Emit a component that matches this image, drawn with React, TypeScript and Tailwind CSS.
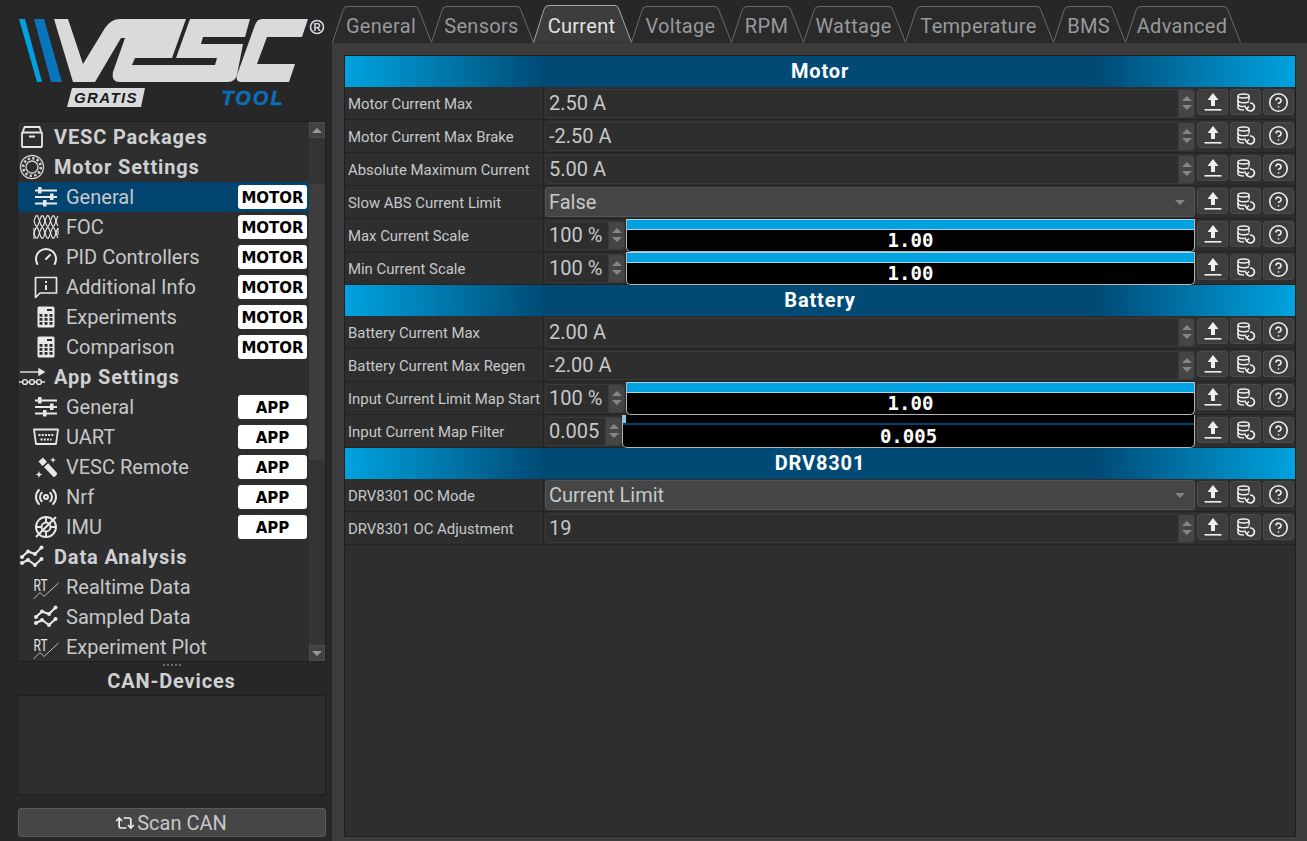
import React from "react";
import { Gauge, Radio, CircleHelp, Repeat2 } from "lucide-react";

const Logo = () => (
  <svg width="314" height="96" viewBox="15 12 314 96" className="block">
    <polygon points="19,19 25,19 42,82 37,82" fill="#00a0e3" />
    <polygon points="34,19 44,19 62,82 51,82" fill="#0a74bd" />
    <path
      d="M54 19 L68 19 L83 64 L105 28 Q111 19 120 19 L186 19 L172 58 L135 58 L132 65 L215 65 L217 58 L176 58 L190 19 L250 19 L245 37 L203 37 L201 44 L243 44 L237 75 Q235 82 228 82 L120 82 Q111 82 113 72 L125 38 L121 38 L95 82 L73 82 Z"
      fill="#d9dadc"
    />
    <path d="M262 19 L308 19 L302 37 L267 37 L257 64 L295 64 L289 82 L242 82 Q235 82 237 75 L255 25 Q257 19 262 19 Z" fill="#d9dadc" />
    <circle cx="317" cy="27" r="6.5" fill="none" stroke="#d9dadc" strokeWidth="1.6" />
    <text x="317" y="31" textAnchor="middle" fontSize="10" fontWeight="700" fill="#d9dadc" fontFamily="Liberation Sans, sans-serif">R</text>
    <polygon points="72,88 145,88 141,107 67,107" fill="#d9dadc" />
    <text x="106" y="103" textAnchor="middle" fontSize="15" fontWeight="700" fontStyle="italic" letterSpacing="1.4" fill="#1a1a1a" fontFamily="Liberation Sans, sans-serif">GRATIS</text>
    <text x="253" y="105" textAnchor="middle" fontSize="20" fontWeight="700" fontStyle="italic" letterSpacing="2" fill="#0a6fb8" stroke="#0a6fb8" strokeWidth="0.4" fontFamily="Liberation Sans, sans-serif">TOOL</text>
  </svg>
);

const W = "#e8e8e8";
const PackageIcon = () => (
  <svg width="24" height="24" viewBox="0 0 24 24" fill="none" stroke={W} strokeWidth="1.8">
    <path d="M2.5 8 L4.5 2 H19.5 L21.5 8" strokeLinejoin="round" />
    <rect x="2" y="7.5" width="20" height="14.5" rx="1" />
    <path d="M9 11.5 H15" strokeWidth="2" />
  </svg>
);
const MotorIcon = () => (
  <svg width="26" height="26" viewBox="0 0 26 26" fill="none" stroke="#cfcfcf">
    <circle cx="13" cy="13" r="11.5" strokeWidth="1.4" />
    <circle cx="13" cy="13" r="6" strokeWidth="1.4" />
    <circle cx="13" cy="13" r="8.8" strokeWidth="2.6" strokeDasharray="2.4 2.2" />
  </svg>
);
const SlidersIcon = () => (
  <svg width="24" height="24" viewBox="0 0 24 24" fill={W}>
    <rect x="1" y="4.5" width="22" height="2" />
    <rect x="1" y="11" width="22" height="2" />
    <rect x="1" y="17.5" width="22" height="2" />
    <rect x="4" y="2" width="3.5" height="6.5" />
    <rect x="16" y="8.5" width="3.5" height="6.5" />
    <rect x="9" y="15" width="3.5" height="6.5" />
  </svg>
);
const wave = (y0: number, amp: number, ph: number) => {
  const pts: string[] = [];
  for (let x = 0; x <= 24; x += 1) {
    pts.push(`${x === 0 ? "M" : "L"}${x + 1} ${(y0 + amp * Math.sin((x / 11) * 2 * Math.PI + ph)).toFixed(2)}`);
  }
  return pts.join(" ");
};
const FocIcon = () => (
  <svg width="26" height="26" viewBox="0 0 26 26" fill="none" stroke={W} strokeWidth="1.1">
    {[0, 3.14].map((p) => (
      <React.Fragment key={p}>
        <path d={wave(7, 5.5, p)} />
        <path d={wave(19, 5.5, p)} />
      </React.Fragment>
    ))}
    <path d="M1 14 V25 M25 14 V21" />
  </svg>
);
const InfoIcon = () => (
  <svg width="24" height="24" viewBox="0 0 24 24" fill="none" stroke={W} strokeWidth="1.7">
    <path d="M1.5 2.5 H22.5 V18 H6 L1.5 22.5 Z" strokeLinejoin="round" />
    <path d="M12 6 V8 M12 10 V15" strokeWidth="2" />
  </svg>
);
const CalcIcon = () => (
  <svg width="24" height="24" viewBox="0 0 24 24">
    <rect x="3.5" y="1.5" width="17" height="21" rx="1.5" fill={W} />
    <rect x="13" y="4" width="5" height="2" fill="#2e2e2e" />
    {[9, 13, 17].flatMap((y) => [5.5, 10.5, 15.5].map((x) => <rect key={`${x}-${y}`} x={x} y={y} width="3" height="2.8" fill="#2e2e2e" />))}
  </svg>
);
const AppIcon = () => (
  <svg width="26" height="26" viewBox="0 0 26 26" fill="none" stroke={W} strokeWidth="1.4">
    <path d="M1 8 H22" />
    <path d="M20 5 L25 8 L20 11 Z" fill={W} />
    <path d="M0 18 H26" />
    <circle cx="6" cy="18" r="2.4" fill="#2e2e2e" />
    <circle cx="13" cy="18" r="2.4" fill="#2e2e2e" />
    <circle cx="20" cy="18" r="2.4" fill="#2e2e2e" />
  </svg>
);
const UartIcon = () => (
  <svg width="26" height="24" viewBox="0 0 26 24" fill="none" stroke={W} strokeWidth="1.8">
    <path d="M1 4.5 H25 L23 19 H3 Z" strokeLinejoin="round" />
    <path d="M5.5 10 H20.5" strokeWidth="2" strokeDasharray="2 1.2" />
    <path d="M7.5 14.5 H18.5" strokeWidth="2" strokeDasharray="2 1.2" />
  </svg>
);
const WandIcon = () => (
  <svg width="24" height="24" viewBox="0 0 24 24" fill={W}>
    <path d="M4.5 6.5 L9 2.5 L13 7 L8.5 11 Z" />
    <path d="M10 12 L14.2 8.2 L23 18 Q23.5 19 22.5 20 L21 21.5 Q20 22.5 19 21.5 Z" />
    <path d="M19 2 L19.8 4.2 L22 5 L19.8 5.8 L19 8 L18.2 5.8 L16 5 L18.2 4.2 Z" />
    <path d="M5 16 L5.9 18.6 L8.5 19.5 L5.9 20.4 L5 23 L4.1 20.4 L1.5 19.5 L4.1 18.6 Z" />
  </svg>
);
const ImuIcon = () => (
  <svg width="24" height="24" viewBox="0 0 24 24" fill="none" stroke={W} strokeWidth="1.9">
    <circle cx="12" cy="12" r="10" />
    <circle cx="12" cy="12" r="4.5" />
    <path d="M2 22 L22 2" />
    <path d="M12 7.5 V2.5 M12 16.5 V21.5 M2.5 12 H7 M17 12 H21.5" />
  </svg>
);
const DataIcon = () => (
  <svg width="24" height="24" viewBox="0 0 24 24" fill="none" stroke={W} strokeWidth="2">
    <path d="M2 12 L8 6.5 L15 9 L21.5 2.5" />
    <path d="M2 18 L8 15 L15 20 L21.5 14" />
    {[[2, 12], [8, 6.5], [15, 9], [21.5, 2.5], [2, 18], [8, 15], [15, 20], [21.5, 14]].map(([x, y]) => (
      <circle key={`${x}${y}`} cx={x} cy={y} r="2" fill={W} stroke="none" />
    ))}
  </svg>
);
const RtIcon = () => (
  <svg width="26" height="26" viewBox="0 0 26 26" fill="none" className="overflow-visible">
    <text x="0.5" y="16.5" fontSize="17" fill={W} fontFamily="Roboto, sans-serif" textLength="14" lengthAdjust="spacingAndGlyphs">RT</text>
    <path d="M0.5 25 L7 18.5 L11 22.5 L25.5 9" stroke="#bdbdbd" strokeWidth="1" />
  </svg>
);
const UploadIcon = () => (
  <svg width="18" height="20" viewBox="0 0 18 20">
    <path d="M9 1 L14.5 8 H11 V14 H7 V8 H3.5 Z" fill="#f0f0f0" />
    <rect x="0.5" y="17" width="17" height="1.6" fill="#f0f0f0" />
  </svg>
);
const DbIcon = () => (
  <svg width="20" height="20" viewBox="0 0 20 20" fill="none" stroke="#f0f0f0" strokeWidth="1.5">
    <path d="M2 4 C2 1.4 13 1.4 13 4 C13 6.6 2 6.6 2 4 Z" />
    <path d="M2 4 V15.5 C2 17 4.5 18 8 18" />
    <path d="M13 4 V8.5" />
    <path d="M2 8 C2 10 5 10.8 8 10.8 C10 10.8 12 10.5 13 9.5" />
    <path d="M2 12 C2 14 5 14.6 8 14.6" />
    <path d="M14 11 A4 4 0 1 1 10.5 16" strokeWidth="1.7" />
    <path d="M8.5 13.5 L10.5 16.8 L13 14.5" strokeWidth="1.5" />
  </svg>
);

const Badge = ({ t }: { t: string }) => (
  <span className="ml-auto mr-[2px] flex h-[24px] w-[69px] items-center justify-center rounded-[3px] bg-white pt-[2px] font-['DejaVu_Sans',sans-serif] text-[15px] font-bold leading-none text-black">
    {t}
  </span>
);

const Head = ({ icon, t }: { icon: React.ReactNode; t: string }) => (
  <div className="flex h-[30px] items-center">
    <span className="flex w-[36px] shrink-0 items-center justify-center pr-[8px]">{icon}</span>
    <span className="text-[20px] font-bold tracking-[0.85px] text-[#cfd0d2]">{t}</span>
  </div>
);
const Item = ({ icon, t, b, sel }: { icon: React.ReactNode; t: string; b?: string; sel?: boolean }) => (
  <div className={`flex h-[30px] items-center ${sel ? "bg-[#01446f]" : ""}`}>
    <span className="ml-[15px] flex w-[26px] shrink-0 items-center justify-center">{icon}</span>
    <span className="ml-[7px] text-[20px] text-[#c6c8ca]">{t}</span>
    {b && <Badge t={b} />}
  </div>
);

const Tree = () => (
  <div className="flex h-[541px] w-[309px] border border-[#1f1f1f] bg-[#2e2e2e]">
    <div className="w-[292px] overflow-hidden">
      <Head icon={<PackageIcon />} t="VESC Packages" />
      <Head icon={<MotorIcon />} t="Motor Settings" />
      <Item icon={<SlidersIcon />} t="General" b="MOTOR" sel />
      <Item icon={<FocIcon />} t="FOC" b="MOTOR" />
      <Item icon={<Gauge size={24} color={W} strokeWidth={2} />} t="PID Controllers" b="MOTOR" />
      <Item icon={<InfoIcon />} t="Additional Info" b="MOTOR" />
      <Item icon={<CalcIcon />} t="Experiments" b="MOTOR" />
      <Item icon={<CalcIcon />} t="Comparison" b="MOTOR" />
      <Head icon={<AppIcon />} t="App Settings" />
      <Item icon={<SlidersIcon />} t="General" b="APP" />
      <Item icon={<UartIcon />} t="UART" b="APP" />
      <Item icon={<WandIcon />} t="VESC Remote" b="APP" />
      <Item icon={<Radio size={24} color={W} strokeWidth={2} />} t="Nrf" b="APP" />
      <Item icon={<ImuIcon />} t="IMU" b="APP" />
      <Head icon={<DataIcon />} t="Data Analysis" />
      <Item icon={<RtIcon />} t="Realtime Data" />
      <Item icon={<DataIcon />} t="Sampled Data" />
      <Item icon={<RtIcon />} t="Experiment Plot" />
    </div>
    <div className="flex w-[16px] flex-col bg-[#343434]">
      <div className="flex h-[16px] items-center justify-center border border-[#4d4d4d] bg-[#424242]">
        <span className="h-0 w-0 border-x-[5px] border-b-[5px] border-x-transparent border-b-[#999]" />
      </div>
      <div className="h-[46px]" />
      <div className="h-[276px] border border-[#3e3e3e] bg-[#3d3d3d]" />
      <div className="flex-1" />
      <div className="flex h-[16px] items-center justify-center border border-[#4d4d4d] bg-[#424242]">
        <span className="h-0 w-0 border-x-[5px] border-t-[5px] border-x-transparent border-t-[#999]" />
      </div>
    </div>
  </div>
);

const tabs = [
  ["General", 99],
  ["Sensors", 102],
  ["Current", 98],
  ["Voltage", 100],
  ["RPM", 72],
  ["Wattage", 102],
  ["Temperature", 148],
  ["BMS", 72],
  ["Advanced", 115],
] as const;

const Tab = ({ t, w }: { t: string; w: number }) => {
  const act = t === "Current";
  const top = act ? 0.5 : 1.5;
  const d = `M0.5 37.5 L${11} ${top + 4} Q12 ${top} 16 ${top} L${w - 16} ${top} Q${w - 13} ${top} ${w - 12} ${top + 4} L${w + 0.5} 37.5`;
  return (
    <div className="relative flex h-[38px] shrink-0 items-center justify-center pr-[1px]" style={{ width: w }}>
      <svg className="absolute inset-0" width={w + 1} height="38" fill="none">
        <path d={d} fill={act ? "#3c3c3c" : "#2a2a2a"} stroke={act ? "#a8a8a8" : "#6a6a6a"} />
      </svg>
      <span className={`relative mt-[3px] text-[20px] tracking-[0.3px] ${act ? "text-[#e2e3e4]" : "text-[#98999b]"}`}>{t}</span>
    </div>
  );
};

const Header = ({ t }: { t: string }) => (
  <div className="flex h-[31px] items-center justify-center bg-[linear-gradient(90deg,#00a3e0_0%,#004a75_21%,#004a75_79%,#00a3e0_100%)] pb-[1px] text-[20px] font-bold tracking-[0.85px] text-white">
    {t}
  </div>
);

const Spin = () => (
  <div className="flex w-[16px] shrink-0 flex-col items-center justify-center gap-[4px] self-stretch rounded-r-[3px] border-l border-[#3a3a3a] bg-[#454545]">
    <span className="h-0 w-0 border-x-[5px] border-b-[5px] border-x-transparent border-b-[#858585]" />
    <span className="h-0 w-0 border-x-[5px] border-t-[5px] border-x-transparent border-t-[#858585]" />
  </div>
);

const Actions = () => (
  <div className="mb-[2px] ml-[2px] flex gap-[2px]">
    {[<UploadIcon key="u" />, <DbIcon key="d" />, <CircleHelp key="h" size={21} color="#f0f0f0" strokeWidth={1.8} />].map((ic, i) => (
      <button key={i} className="flex h-[26px] w-[31px] items-center justify-center rounded-[3px] border border-[#4a4a4a] bg-[#3e3e3e]">
        {ic}
      </button>
    ))}
  </div>
);

const Row = ({ label, children }: { label: string; children: React.ReactNode }) => (
  <div className="flex h-[33px] items-center border-b border-[#232323]">
    <div className="flex h-full w-[199px] shrink-0 items-center border-r border-[#232323] pl-[3px] pt-[2px] text-[14.9px] text-[#c6c8ca]">{label}</div>
    <div className="ml-[1px] flex min-w-0 flex-1 items-center pr-[1px]">
      {children}
      <Actions />
    </div>
  </div>
);

const NumBox = ({ v }: { v: string }) => (
  <div className="flex h-[29px] min-w-0 flex-1 items-center rounded-[3px] border border-[#3a3a3a] bg-[#2e2e2e]">
    <span className="flex-1 pl-[3px] text-[20px] text-[#c6c8ca]">{v}</span>
    <Spin />
  </div>
);

const Combo = ({ v }: { v: string }) => (
  <div className="flex h-[30px] min-w-0 flex-1 items-center rounded-[3px] border border-[#555] bg-[#454545] pl-[3px] pr-[9px]">
    <span className="flex-1 text-[20px] text-[#c6c8ca]">{v}</span>
    <span className="h-0 w-0 border-x-[5px] border-t-[5px] border-x-transparent border-t-[#858585]" />
  </div>
);

const BarBox = ({ v, pct, w }: { v: string; pct: string; w: "s" | "l" }) => (
  <>
    <div className={`flex h-[29px] shrink-0 items-center rounded-[3px] border border-[#3a3a3a] bg-[#2e2e2e] ${w === "s" ? "w-[80px]" : "w-[77px]"}`}>
      <span className="flex-1 pl-[3px] text-[20px] text-[#c6c8ca]">{v}</span>
      <Spin />
    </div>
    <div className={`relative h-[33px] min-w-0 flex-1 overflow-hidden rounded-b-[5px] border border-t-0 border-[#b5b5b5] bg-black ${w === "s" ? "ml-[1px]" : "ml-0"}`}>
      {pct === "full" ? (
        <div className="h-[11px] border-y border-[#a9d5ea] bg-[#00a3e0]" />
      ) : (
        <div className="flex h-[10px] border-b-2 border-[#01446f]">
          <div className="w-[3px] bg-[#7cc8ee]" />
        </div>
      )}
      <span className="absolute inset-x-0 bottom-0 text-center font-['DejaVu_Sans_Mono',monospace] text-[19px] font-bold leading-[21px] text-white">{pct === "full" ? "1.00" : "0.005"}</span>
    </div>
  </>
);

export default function App() {
  return (
    <div className="flex h-[841px] w-[1307px] overflow-hidden bg-[#272727] font-['Roboto',sans-serif]">
      <div className="flex w-[332px] shrink-0 flex-col pl-[17px]">
        <div className="ml-[-2px] h-[121px] pt-[12px]">
          <Logo />
        </div>
        <Tree />
        <div className="flex h-[6px] w-[309px] items-center justify-center">
          <div className="w-[18px] border-t-2 border-dotted border-[#6e6e6e]" />
        </div>
        <div className="flex h-[27px] w-[309px] items-center justify-center pb-[2px] text-[20px] font-bold tracking-[0.85px] text-[#cfd0d2]">CAN-Devices</div>
        <div className="h-[100px] w-[309px] border border-[#1f1f1f] bg-[#2e2e2e]" />
        <button className="ml-[1px] mt-[13px] flex h-[29px] w-[308px] items-center justify-center gap-[2px] rounded-[3px] border border-[#5a5a5a] bg-[#464646] pr-[2px] text-[20px] text-[#c6c8ca]">
          <Repeat2 size={20} color="#f0f0f0" strokeWidth={2} />
          Scan CAN
        </button>
      </div>
      <div className="flex min-w-0 flex-1 flex-col">
        <div className="flex h-[43px] items-end pt-[5px]">
          {tabs.map(([t, w]) => (
            <Tab key={t} t={t} w={w} />
          ))}
        </div>
        <div className="flex-1 border-t border-[#3c3c3c] bg-[#3c3c3c] pb-[4px] pl-[12px] pr-[11px] pt-[11px]">
          <div className="h-full border border-[#1f1f1f] bg-[#2e2e2e]">
            <Header t="Motor" />
            <Row label="Motor Current Max"><NumBox v="2.50 A" /></Row>
            <Row label="Motor Current Max Brake"><NumBox v="-2.50 A" /></Row>
            <Row label="Absolute Maximum Current"><NumBox v="5.00 A" /></Row>
            <Row label="Slow ABS Current Limit"><Combo v="False" /></Row>
            <Row label="Max Current Scale"><BarBox v="100 %" pct="full" w="s" /></Row>
            <Row label="Min Current Scale"><BarBox v="100 %" pct="full" w="s" /></Row>
            <Header t="Battery" />
            <Row label="Battery Current Max"><NumBox v="2.00 A" /></Row>
            <Row label="Battery Current Max Regen"><NumBox v="-2.00 A" /></Row>
            <Row label="Input Current Limit Map Start"><BarBox v="100 %" pct="full" w="s" /></Row>
            <Row label="Input Current Map Filter"><BarBox v="0.005" pct="low" w="l" /></Row>
            <Header t="DRV8301" />
            <Row label="DRV8301 OC Mode"><Combo v="Current Limit" /></Row>
            <Row label="DRV8301 OC Adjustment"><NumBox v="19" /></Row>
          </div>
        </div>
      </div>
    </div>
  );
}
